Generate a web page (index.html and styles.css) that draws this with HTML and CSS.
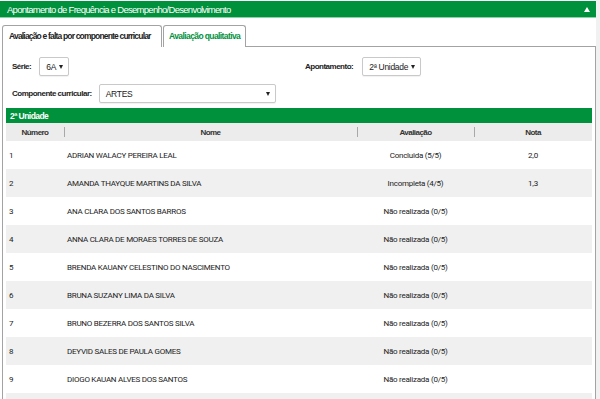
FILE: index.html
```html
<!DOCTYPE html>
<html lang="pt">
<head>
<meta charset="utf-8">
<title>Apontamento</title>
<link rel="stylesheet" href="styles.css">
</head>
<body>
<div class="page">
  <div class="main">
    <div class="titlebar">
      <span class="title">Apontamento de Frequência e Desempenho/Desenvolvimento</span>
      <span class="tri"></span>
    </div>
    <div class="tabs">
      <div class="tab">Avaliação e falta por componente curricular</div>
      <div class="tab active">Avaliação qualitativa</div>
      <div class="tab-fill"></div>
    </div>
    <div class="panel">
      <div class="filters">
        <div class="field">
          <span class="label">Série:</span>
          <div class="select sel-serie"><span>6A</span><span class="arrow"></span></div>
        </div>
        <div class="field">
          <span class="label">Apontamento:</span>
          <div class="select sel-apont"><span>2ª Unidade</span><span class="arrow"></span></div>
        </div>
      </div>
      <div class="filters2">
        <div class="field">
          <span class="label">Componente curricular:</span>
          <div class="select sel-comp"><span>ARTES</span><span class="arrow"></span></div>
        </div>
      </div>
      <div class="unit">2ª Unidade</div>
      <table class="grid">
        <colgroup>
          <col class="c-num"><col class="c-nome"><col class="c-aval"><col class="c-nota">
        </colgroup>
        <thead>
          <tr><th>Número</th><th>Nome</th><th>Avaliação</th><th>Nota</th></tr>
        </thead>
        <tbody>
          <tr><td class="num">1</td><td class="nome">ADRIAN WALACY PEREIRA LEAL</td><td class="ctr">Concluida (5/5)</td><td class="ctr">2,0</td></tr>
          <tr><td class="num">2</td><td class="nome">AMANDA THAYQUE MARTINS DA SILVA</td><td class="ctr">Incompleta (4/5)</td><td class="ctr">1,3</td></tr>
          <tr><td class="num">3</td><td class="nome">ANA CLARA DOS SANTOS BARROS</td><td class="ctr">Não realizada (0/5)</td><td class="ctr"></td></tr>
          <tr><td class="num">4</td><td class="nome">ANNA CLARA DE MORAES TORRES DE SOUZA</td><td class="ctr">Não realizada (0/5)</td><td class="ctr"></td></tr>
          <tr><td class="num">5</td><td class="nome">BRENDA KAUANY CELESTINO DO NASCIMENTO</td><td class="ctr">Não realizada (0/5)</td><td class="ctr"></td></tr>
          <tr><td class="num">6</td><td class="nome">BRUNA SUZANY LIMA DA SILVA</td><td class="ctr">Não realizada (0/5)</td><td class="ctr"></td></tr>
          <tr><td class="num">7</td><td class="nome">BRUNO BEZERRA DOS SANTOS SILVA</td><td class="ctr">Não realizada (0/5)</td><td class="ctr"></td></tr>
          <tr><td class="num">8</td><td class="nome">DEYVID SALES DE PAULA GOMES</td><td class="ctr">Não realizada (0/5)</td><td class="ctr"></td></tr>
          <tr><td class="num">9</td><td class="nome">DIOGO KAUAN ALVES DOS SANTOS</td><td class="ctr">Não realizada (0/5)</td><td class="ctr"></td></tr>
          <tr><td class="num">&nbsp;</td><td class="nome"></td><td class="ctr"></td><td class="ctr"></td></tr>
        </tbody>
      </table>
    </div>
  </div>
  <div class="scroll"></div>
</div>
</body>
</html>
```
FILE: styles.css
```css
html, body {
  margin: 0;
  padding: 0;
  background: #fff;
}
body {
  font-family: "Liberation Sans", Arial, sans-serif;
  color: #222;
}
.page {
  display: flex;
  height: 399px;
  overflow: hidden;
}
.main {
  width: 596px;
  padding-top: 1px;
}
.scroll {
  flex: 1;
  background: #f1f1f1;
}
.titlebar {
  height: 16px;
  background: #00913d;
  border-bottom: 1px solid #8fd0a8;
  display: flex;
  align-items: center;
  justify-content: space-between;
  padding: 0 6px 0 7px;
}
.title {
  color: #fff;
  font-size: 9.5px;
  letter-spacing: -0.72px;
  white-space: nowrap;
}
.tri {
  width: 0;
  height: 0;
  border-left: 3px solid transparent;
  border-right: 3px solid transparent;
  border-bottom: 5px solid #fff;
}
.tabs {
  display: flex;
  margin-top: 7px;
  padding-left: 2px;
  height: 22px;
}
.tab {
  border: 1px solid #a3a3a3;
  border-bottom: none;
  border-radius: 3px 3px 0 0;
  font-size: 8.5px;
  font-weight: bold;
  letter-spacing: -0.82px;
  white-space: nowrap;
  display: flex;
  align-items: center;
  color: #222;
  background: #fff;
  box-sizing: border-box;
  padding-bottom: 1px;
}
.tab:first-child {
  width: 160px;
  padding-left: 6px;
}
.tab.active {
  color: #00913d;
  margin-left: 1px;
  width: 83px;
  padding-left: 5px;
  letter-spacing: -0.6px;
}
.tab-fill {
  flex: 1;
  border-bottom: 1px solid #a3a3a3;
}
.panel {
  margin-left: 2px;
  width: 594px;
  box-sizing: border-box;
  border-left: 1px solid #a3a3a3;
  border-right: 1px solid #a3a3a3;
  padding: 0 3px;
}
.filters {
  display: grid;
  grid-template-columns: 1fr 1fr;
  padding-top: 10px;
}
.filters2 {
  padding-top: 8px;
}
.field {
  display: flex;
  align-items: center;
  padding-left: 6px;
}
.label {
  font-size: 8px;
  font-weight: bold;
  letter-spacing: -0.5px;
  color: #222;
  white-space: nowrap;
}
.select {
  height: 19px;
  box-sizing: border-box;
  border: 1px solid #c9c9c9;
  border-radius: 2px;
  background: #fff;
  box-shadow: 0 1px 1px rgba(0,0,0,0.06);
  display: flex;
  align-items: center;
  justify-content: space-between;
  padding: 0 5px 0 6px;
  font-size: 8.5px;
  letter-spacing: -0.3px;
  color: #222;
  white-space: nowrap;
}
.arrow {
  width: 0;
  height: 0;
  border-left: 2.5px solid transparent;
  border-right: 2.5px solid transparent;
  border-top: 4px solid #222;
}
.sel-serie {
  width: 30px;
  margin-left: 8px;
}
.sel-apont {
  width: 59px;
  margin-left: 9px;
}
.sel-comp {
  width: 177px;
  margin-left: 7px;
}
.unit {
  margin-top: 5px;
  height: 15px;
  background: #00913d;
  color: #fff;
  font-size: 8.5px;
  font-weight: bold;
  letter-spacing: -0.55px;
  display: flex;
  align-items: center;
  padding-left: 4px;
}
.grid {
  width: 100%;
  border-collapse: collapse;
  table-layout: fixed;
  font-family: Roboto, "Liberation Sans", sans-serif;
}
.c-num { width: 58px; }
.c-nome { width: 293px; }
.c-aval { width: 117px; }
.c-nota { width: auto; }
.grid thead tr {
  background: #ececec;
  height: 18px;
}
.grid th {
  font-family: "Liberation Sans", Arial, sans-serif;
  font-size: 8px;
  font-weight: bold;
  letter-spacing: -0.55px;
  color: #333;
  padding: 0;
  position: relative;
  text-align: center;
}
.grid th + th::before {
  content: "";
  position: absolute;
  left: 0;
  top: 4px;
  bottom: 4px;
  width: 1px;
  background: #a8a8a8;
}
.grid tbody tr {
  height: 28px;
}
.grid tbody tr:nth-child(even) {
  background: #f0f0f0;
}
.grid td {
  font-size: 8px;
  letter-spacing: -0.25px;
  color: #222;
  padding: 0;
}
.grid td.num {
  padding-left: 3px;
}
.grid td.nome {
  padding-left: 3px;
}
.grid td.ctr {
  text-align: center;
}
```
